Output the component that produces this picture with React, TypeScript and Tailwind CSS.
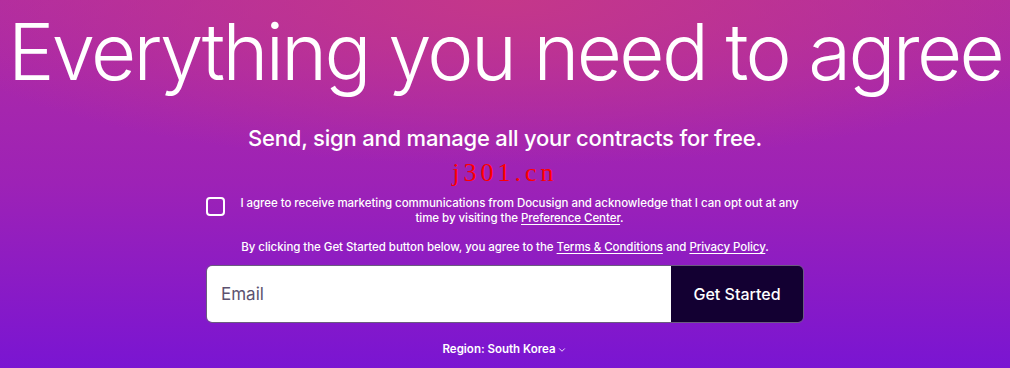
import { ChevronDown } from 'lucide-react'

export default function App() {
  return (
    <div className="relative h-[368px] w-full overflow-hidden bg-[radial-gradient(ellipse_60%_45%_at_50%_0%,#c4378a_0%,rgba(196,55,138,0)_100%),linear-gradient(180deg,#b12ca2_0%,#9d22b6_50%,#7a15d2_100%)] font-['Inter',sans-serif] text-white">
      <div className="flex flex-col items-center">
        <h1 className="pt-[13px] text-[78px] font-light leading-none tracking-[-2.65px] whitespace-nowrap">
          Everything you need to agree
        </h1>

        <p className="mt-[31px] text-[22px] font-medium tracking-[-0.2px]">
          Send, sign and manage all your contracts for free.
        </p>

        <div className="h-[41px] pt-[5px] font-['Liberation_Serif',serif] text-[26px] leading-none tracking-[4px] text-[#ff0000]">
          j301.cn
        </div>

        <div className="flex w-[598px] items-start gap-[10px]">
          <span className="mt-[1px] h-[19px] w-[19px] shrink-0 rounded-[4px] border-2 border-white" />
          <div className="flex flex-1 flex-col items-center text-[11.5px] font-medium leading-[15px] tracking-[-0.05px]">
            <span>I agree to receive marketing communications from Docusign and acknowledge that I can opt out at any</span>
            <span>
              time by visiting the <a className="underline underline-offset-2">Preference Center</a>.
            </span>
          </div>
        </div>

        <p className="mt-[14px] text-[11.5px] font-medium leading-[15px] tracking-[-0.05px]">
          By clicking the Get Started button below, you agree to the{' '}
          <a className="underline underline-offset-2">Terms &amp; Conditions</a> and{' '}
          <a className="underline underline-offset-2">Privacy Policy</a>.
        </p>

        <div className="mt-[10px] flex h-[58px] w-[598px] overflow-hidden rounded-[6px] border border-[#6b5c80]">
          <input
            placeholder="Email"
            className="h-full flex-1 bg-white px-[14px] text-[17px] text-[#1c1530] outline-none placeholder:text-[#5d5270]"
          />
          <button className="w-[132px] bg-[#130032] text-[16px] font-medium text-white">Get Started</button>
        </div>

        <div className="mt-[18px] flex items-center gap-[2px] text-[11.5px] font-semibold">
          Region: South Korea
          <ChevronDown size={10} strokeWidth={2} />
        </div>
      </div>
    </div>
  )
}
